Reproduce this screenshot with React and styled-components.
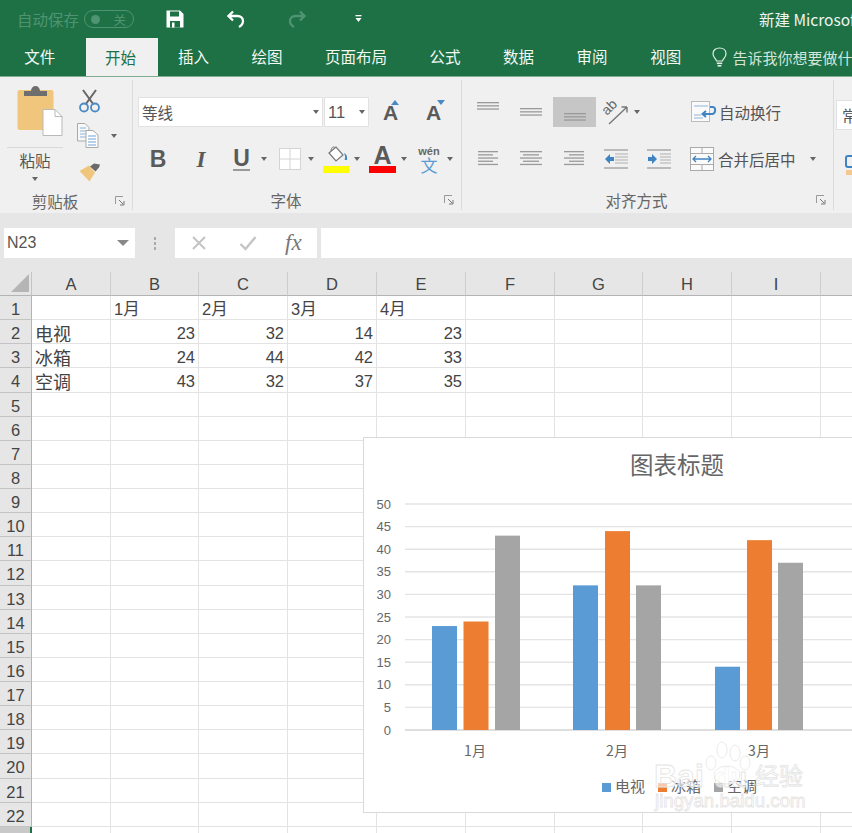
import React from 'react'
import styled, { createGlobalStyle } from 'styled-components'

const CJK = `"Noto Sans CJK SC", "Liberation Sans", sans-serif`
const LATIN = `"Liberation Sans", "Noto Sans CJK SC", sans-serif`

const GlobalStyle = createGlobalStyle`
  html, body { margin: 0; padding: 0; background: #fff; }
  * { box-sizing: border-box; }
`

const Page = styled.div`
  width: 852px;
  height: 833px;
  overflow: hidden;
  font-family: ${CJK};
  color: #444;
  background: #fff;
`

// title bar
const TitleBar = styled.div`
  height: 38px;
  background: #1e7145;
  display: flex;
  align-items: center;
  white-space: nowrap;
  overflow: hidden;
  padding-left: 17px;
  & > * {
    flex-shrink: 0;
  }
`
const AutoSave = styled.span`
  font-size: 15.5px;
  color: #4f9472;
  width: 67px;
`
const Toggle = styled.div`
  width: 50px;
  height: 18px;
  border: 1px solid #4f9472;
  border-radius: 9px;
  display: flex;
  align-items: center;
  justify-content: space-between;
  padding: 0 7px 0 6px;
  font-size: 12.5px;
  color: #4f9472;
  margin-right: 32px;
  &::before {
    content: '';
    width: 9px;
    height: 9px;
    border-radius: 50%;
    background: #4f9472;
  }
`
const QuickIcon = styled.div`
  width: ${p => p.$w}px;
  margin-right: ${p => p.$mr || 0}px;
  display: flex;
  justify-content: center;
  transform: ${p => (p.$flip ? 'scaleX(-1)' : 'none')};
`
const DocTitle = styled.span`
  font-size: 15.5px;
  color: #eef5f1;
  margin-left: 397px;
`

// tabs
const TabBar = styled.div`
  height: 39px;
  background: #1e7145;
  display: flex;
  align-items: flex-end;
  padding-left: 3px;
  white-space: nowrap;
  overflow: hidden;
  border-bottom: 1px solid #7fae95;
  & > * {
    flex-shrink: 0;
  }
`
const Tab = styled.div`
  height: 39px;
  line-height: 38px;
  padding: ${p => (p.$active ? '0 22px 0 19px' : '0 21.25px')};
  font-size: 15.5px;
  color: ${p => (p.$active ? '#1e7145' : '#f2f7f4')};
  background: ${p => (p.$active ? '#f0f0f0' : 'transparent')};
  margin: ${p => (p.$active ? '0 -1.25px -1px 9.5px' : '0')};
`
const TellMe = styled.div`
  display: flex;
  align-items: center;
  gap: 5px;
  margin-left: 10px;
  height: 38px;
  font-size: 15px;
  color: #d3e5da;
`

// ribbon
const Ribbon = styled.div`
  height: 136px;
  background: #f0f0f0;
  display: flex;
  overflow: hidden;
  padding-top: 3px;
`
const Group = styled.div`
  flex: 0 0 ${p => p.$w}px;
  height: 130px;
  border-right: 1px solid #dcdcdc;
  display: flex;
  flex-direction: column;
`
const GroupBody = styled.div`
  height: 113px;
  display: flex;
`
const GroupFooter = styled.div`
  height: 20px;
  display: grid;
  grid-template-columns: 1fr auto 1fr;
  align-items: center;
  font-size: 15.5px;
  line-height: 20px;
  color: #666;
  padding-right: 22px;
`
const Launcher = styled.svg`
  justify-self: end;
  width: 10px;
  height: 10px;
  margin-right: -15px;
`
const Stack = styled.div`
  display: flex;
  flex-direction: column;
`
const PasteColumn = styled(Stack)`
  width: 56px;
  margin-left: 7px;
  align-items: center;
  padding-top: 5px;
`
const PasteArt = styled.div`
  margin-left: 10px;
`
const PasteLabel = styled.div`
  width: 100%;
  border-top: 1px solid #d8d8d8;
  margin: 10px 0 5px;
  text-align: center;
  font-size: 15.5px;
  line-height: 24px;
  color: #555;
`
const ClipTools = styled(Stack)`
  margin-left: 14px;
  padding-top: 3px;
`
const ToolRow = styled.div`
  height: ${p => p.$h}px;
  display: flex;
  align-items: center;
  gap: ${p => p.$gap || 0}px;
  padding-left: ${p => p.$pad || 0}px;
`
const Rows = styled(Stack)`
  padding-top: 17px;
  gap: 17px;
`
const Row = styled.div`
  height: 30px;
  display: flex;
  align-items: center;
  padding-left: ${p => p.$pad || 0}px;
`
const Slot = styled.div`
  flex: 0 0 ${p => p.$w}px;
  height: 30px;
  margin-left: ${p => p.$ml || 0}px;
  display: flex;
  align-items: center;
  justify-content: center;
  position: relative;
  background: ${p => (p.$selected ? '#c6c6c6' : 'transparent')};
`
const Combo = styled.div`
  width: ${p => p.$w}px;
  height: 30px;
  background: #fff;
  border: 1px solid #e2e2e2;
  display: flex;
  align-items: center;
  justify-content: space-between;
  padding: 0 3px 0 3px;
  font-size: 15.5px;
  color: #555;
  margin-right: ${p => p.$mr || 0}px;
`
const SizeValue = styled.span`
  font-family: ${LATIN};
  font-size: 16.5px;
`
const FontGlyph = styled.span`
  font-family: ${p => (p.$serif ? '"Liberation Serif", serif' : LATIN)};
  font-size: ${p => p.$size || 23}px;
  font-weight: 700;
  font-style: ${p => (p.$italic ? 'italic' : 'normal')};
  color: #5a5a5a;
  line-height: 1;
  margin-top: ${p => p.$lift ? `-${p.$lift}px` : '0'};
`
const UnderGlyph = styled(FontGlyph)`
  border-bottom: 2px solid #999;
  line-height: 22px;
`
const SizeArrow = styled.svg`
  position: absolute;
  left: ${p => p.$left}px;
  top: 3px;
  width: 8px;
  height: 5px;
`
const ColorBar = styled.div`
  position: absolute;
  left: 0;
  bottom: 1px;
  width: 100%;
  height: 7px;
  background: ${p => p.$color};
`
const Caret = styled.i`
  display: block;
  width: 0;
  height: 0;
  border-left: 3.5px solid transparent;
  border-right: 3.5px solid transparent;
  border-top: 4px solid #666;
`
const NameCaret = styled(Caret)`
  border-left-width: 6px;
  border-right-width: 6px;
  border-top-width: 6px;
  border-top-color: #888;
`
const Wen = styled(Stack)`
  align-items: center;
  font-size: 11px;
  line-height: 11px;
  color: #666;
  font-family: ${LATIN};
  font-weight: 700;
`
const WenChar = styled.span`
  font-family: ${CJK};
  font-weight: 400;
  font-size: 17px;
  line-height: 16px;
  color: #5b9bd5;
`
const Action = styled.span`
  font-size: 15.5px;
  color: #555;
  white-space: nowrap;
  margin-left: ${p => p.$ml || 0}px;
`
const NumberBox = styled(Combo)`
  width: 60px;
  margin: 20px 0 0 2px;
  padding-left: 5px;
`
const NumberTool = styled.div`
  height: 30px;
  margin: 21px 0 0 11px;
  display: flex;
  align-items: center;
`

// formula bar
const FormulaBar = styled.div`
  height: 59px;
  background: #e6e6e6;
  display: flex;
  align-items: flex-start;
  padding: 15px 0 0 4px;
`
const NameBox = styled.div`
  width: 131px;
  height: 30px;
  background: #fff;
  display: flex;
  align-items: center;
  justify-content: space-between;
  padding: 0 6px 0 3px;
  font: 16px ${LATIN};
  color: #555;
`
const Grip = styled.div`
  width: 40px;
  height: 30px;
  display: flex;
  flex-direction: column;
  align-items: center;
  justify-content: center;
  gap: 2px;
  & > i {
    width: 2px;
    height: 3px;
    background: #aaa;
  }
`
const FormulaTools = styled.div`
  width: 142px;
  height: 30px;
  background: #fff;
  display: flex;
  align-items: center;
  padding-left: 16px;
  margin-right: 4px;
  gap: 32px;
`
const FxMark = styled.span`
  font: italic 23px "Liberation Serif", serif;
  color: #777;
  margin-left: -4px;
`
const FormulaInput = styled.div`
  flex: 1;
  height: 30px;
  background: #fff;
`

// sheet
const SheetArea = styled.div`
  position: relative;
  height: 561px;
  overflow: hidden;
`
const Sheet = styled.div`
  display: grid;
  grid-template-columns: 32px 79px 88px 89px 89px 89px 89px 88px 89px 89px 60px;
  grid-template-rows: 24px repeat(23, 24.14px);
  font-family: ${LATIN};
  font-size: 16.5px;
  color: #444;
`
const Corner = styled.div`
  background: #e6e6e6;
  border-right: 1px solid #c4c4c4;
  border-bottom: 1px solid #b4b4b4;
  display: flex;
  align-items: flex-end;
  justify-content: flex-end;
  padding: 0 2px 3px 0;
  &::after {
    content: '';
    width: 0;
    height: 0;
    border-left: 18px solid transparent;
    border-bottom: 18px solid #b5b5b5;
  }
`
const ColHead = styled.div`
  background: #e6e6e6;
  border-right: 1px solid #cdcdcd;
  border-bottom: 1px solid #b4b4b4;
  text-align: center;
  line-height: 25px;
`
const RowHead = styled.div`
  background: ${p => (p.$off ? '#c9c9c9' : '#e6e6e6')};
  border-right: ${p => (p.$off ? '2px solid #1e7145' : '1px solid #b4b4b4')};
  border-bottom: 1px solid #c4c4c4;
  text-align: center;
  line-height: 27px;
`
const Cell = styled.div`
  background: #fff;
  border-right: 1px solid #e3e3e3;
  border-bottom: 1px solid #e3e3e3;
  padding: 0 3px;
  line-height: 26px;
  white-space: nowrap;
  text-align: ${p => (p.$num ? 'right' : 'left')};
  font-size: ${p => (p.$big ? '18px' : 'inherit')};
  font-family: ${p => (p.$big ? CJK : 'inherit')};
`
const ChartFrame = styled.div`
  position: absolute;
  left: 363px;
  top: 165px;
  width: 500px;
  height: 376px;
  background: #fff;
  border: 1.5px solid #d9d9d9;
`
const ChartSvg = styled.svg`
  display: block;
  position: absolute;
  left: -1.5px;
  top: -1.5px;
  font-family: ${LATIN};
`
const IconSvg = styled.svg`
  display: block;
  flex-shrink: 0;
`
const LiftedSvg = styled(IconSvg)`
  margin-top: -8px;
`

const Svg = ({ w, h, children }) => (
  <IconSvg width={w} height={h} viewBox={`0 0 ${w} ${h}`}>{children}</IconSvg>
)

const SaveIcon = () => (
  <Svg w={18} h={18}>
    <path d="M0.5 0.5H14L17.5 4V17.5H0.5Z" fill="#fff" />
    <rect x="4" y="1.5" width="9" height="5" fill="#1e7145" />
    <rect x="4" y="11" width="10" height="6.5" fill="#1e7145" />
    <rect x="6" y="12.5" width="2.5" height="5" fill="#fff" />
  </Svg>
)
const UndoIcon = ({ color }) => (
  <Svg w={18} h={18}>
    <path d="M6 1.5L1.5 6L6 10.5M2 6H10.5C13.8 6 16 8 16 11C16 13.8 14.5 15.6 12 17" fill="none" stroke={color} strokeWidth="2.3" />
  </Svg>
)
const QuickCaret = () => (
  <Svg w={7} h={8}>
    <rect x="0.5" y="0" width="6" height="1.3" fill="#fff" />
    <path d="M0.5 3H6.5L3.5 7Z" fill="#fff" />
  </Svg>
)
const BulbIcon = () => (
  <Svg w={15} h={21}>
    <path d="M4.5 14C4 11.5 1 10.5 1 6.7C1 3.2 3.8 1 7.5 1C11.2 1 14 3.2 14 6.7C14 10.5 11 11.5 10.5 14Z" fill="none" stroke="#e2eee7" strokeWidth="1.2" />
    <rect x="4.8" y="15.5" width="5.4" height="1.6" fill="#e2eee7" />
    <rect x="5.6" y="18" width="3.8" height="1.6" fill="#e2eee7" />
  </Svg>
)
const PasteIcon = () => (
  <Svg w={46} h={52}>
    <rect x="0.5" y="5" width="36" height="40" rx="2" fill="#f0c67c" />
    <path d="M7 11V6H14C14 3 16 1 18.5 1C21 1 23 3 23 6H30V11Z" fill="#6e6e6e" />
    <path d="M26 24.5H38L45 31.5V50.5H26Z" fill="#fff" stroke="#b9b9b9" />
    <path d="M38 24.5V31.5H45" fill="none" stroke="#b9b9b9" />
  </Svg>
)
const CutIcon = () => (
  <Svg w={21} h={24}>
    <path d="M4 1L14.5 15.5M17 1L6.5 15.5" stroke="#666" strokeWidth="2" fill="none" />
    <circle cx="5" cy="18.5" r="4" fill="none" stroke="#4a8ac4" strokeWidth="1.8" />
    <circle cx="16" cy="18.5" r="4" fill="none" stroke="#4a8ac4" strokeWidth="1.8" />
  </Svg>
)
const CopyIcon = () => (
  <Svg w={22} h={25}>
    <path d="M0.5 0.5H8L12 4.5V18H0.5Z" fill="#f7f7f7" stroke="#aaa" />
    <path d="M3 5H9M3 8H9M3 11H9M3 14H9" stroke="#8fb5da" />
    <path d="M9 7.5H16L21 12V24.5H9Z" fill="#fff" stroke="#aaa" />
    <path d="M11 13H19M11 16H19M11 19H19M11 22H19" stroke="#6fa3d4" />
  </Svg>
)
const BrushIcon = () => (
  <Svg w={22} h={19}>
    <path d="M0.5 8L10 2.5L16 9.5L10.5 18.5Z" fill="#f0c67c" />
    <path d="M11 3.5L15 0.5L21 1.5L20 4.5L16.5 8.5Z" fill="#6a6a6a" />
  </Svg>
)
const SizeA = ({ down }) => (
  <Slot $w={43}>
    <FontGlyph $size={21}>A</FontGlyph>
    <SizeArrow viewBox="0 0 8 5" $left={down ? 25 : 22}>
      <path d={down ? 'M0 0H8L4 5Z' : 'M0 5H8L4 0Z'} fill="#4a8ac4" />
    </SizeArrow>
  </Slot>
)
const BorderIcon = () => (
  <Svg w={22} h={22}>
    <rect x="0.5" y="0.5" width="21" height="21" fill="#fff" stroke="#d4d4d4" />
    <path d="M11 1V21M1 11H21" stroke="#d4d4d4" />
  </Svg>
)
const FillIcon = () => (
  <LiftedSvg width="26" height="20" viewBox="0 0 26 20">
    <path d="M6 8L13 2L20 10L13 16Z" fill="#fff" stroke="#777" strokeWidth="1.2" />
    <path d="M8 6C8 3 10 1 12 2.5" fill="none" stroke="#777" />
    <path d="M21 8C24 9.5 24.5 12 24 15H21.5C22.5 13 22 10 21 8Z" fill="#4a8ac4" />
  </LiftedSvg>
)
const AlignIcon = ({ widths, y = 0, w = 22 }) => (
  <Svg w={w} h={20}>
    {widths.map(([x, width], i) => (
      <rect key={i} x={x} y={y + i * 3.2} width={width} height="1.3" fill="#9a9a9a" />
    ))}
  </Svg>
)
const OrientIcon = () => (
  <Svg w={27} h={26}>
    <path d="M7 25L25 8M25 8H19.5M25 8V13.5" fill="none" stroke="#777" strokeWidth="1.4" />
    <text x="0" y="0" fontSize="14" fill="#666" fontFamily={LATIN} transform="translate(5 17) rotate(-45)">ab</text>
  </Svg>
)
const WrapIcon = () => (
  <Svg w={26} h={22}>
    <rect x="0.5" y="0.5" width="18" height="20" fill="#fafafa" stroke="#bbb" />
    <path d="M3 5H17M3 14H10M3 17H12" stroke="#8fb5da" />
    <path d="M19 6H22C25 6 25 13 21 13H12M15 10L11.5 13L15 16" fill="none" stroke="#3f83c2" strokeWidth="2" />
  </Svg>
)
const IndentIcon = ({ flip }) => (
  <Svg w={24} h={20}>
    <path d="M0 1H24M0 19H24" stroke="#a8a8a8" strokeWidth="1.3" />
    <path d={flip ? 'M13 5H24M13 8H24M13 11H24M13 14H24' : 'M11 5H24M11 8H24M11 11H24M11 14H24'} stroke="#b0b0b0" />
    <path d={flip ? 'M1 8H5V5L10 10L5 15V12H1Z' : 'M10 8H6V5L1 10L6 15V12H10Z'} fill="#3f83c2" />
  </Svg>
)
const MergeIcon = () => (
  <Svg w={24} h={24}>
    <rect x="0.5" y="0.5" width="23" height="23" fill="#fafafa" stroke="#aaa" />
    <path d="M1 6.5H23M1 17.5H23M12 1V6.5M12 17.5V23" stroke="#aaa" />
    <path d="M3 12H21M6 9L3 12L6 15M18 9L21 12L18 15" fill="none" stroke="#3f83c2" strokeWidth="1.3" />
  </Svg>
)
const LauncherIcon = () => (
  <Launcher viewBox="0 0 10 10">
    <path d="M0.5 8V0.5H8" fill="none" stroke="#999" />
    <path d="M4 4L8 8M9 5V9H5" fill="none" stroke="#777" />
  </Launcher>
)

const columns = ['A', 'B', 'C', 'D', 'E', 'F', 'G', 'H', 'I', 'J']
const tableData = {
  1: { B: '1月', C: '2月', D: '3月', E: '4月' },
  2: { A: '电视', B: 23, C: 32, D: 14, E: 23 },
  3: { A: '冰箱', B: 24, C: 44, D: 42, E: 33 },
  4: { A: '空调', B: 43, C: 32, D: 37, E: 35 },
}
const tabs = ['插入', '绘图', '页面布局', '公式', '数据', '审阅', '视图']

const series = [
  { name: '电视', color: '#5b9bd5', values: [23, 32, 14], x: [432, 573, 715], legend: 602 },
  { name: '冰箱', color: '#ed7d31', values: [24, 44, 42], x: [463.5, 605, 747], legend: 658 },
  { name: '空调', color: '#a5a5a5', values: [43, 32, 37], x: [495, 636, 778], legend: 714 },
]
const months = [['1月', 475], ['2月', 617], ['3月', 759]]
const ticks = [0, 5, 10, 15, 20, 25, 30, 35, 40, 45, 50]
const valueY = v => 730 - v * 4.52

const Chart = () => (
  <ChartFrame>
    <ChartSvg width="500" height="376" viewBox="363 437 500 376">
      <text x="677" y="474" textAnchor="middle" fontSize="23.5" fill="#666" fontFamily={CJK}>图表标题</text>
      {ticks.map(t => (
        <g key={t}>
          <line x1="405" x2="860" y1={valueY(t)} y2={valueY(t)} stroke={t === 0 ? '#d4d4d4' : '#e4e4e4'} strokeWidth="1.4" />
          <text x="391" y={valueY(t) + 4.5} textAnchor="end" fontSize="13" fill="#666">{t}</text>
        </g>
      ))}
      {series.map(s => s.values.map((v, i) => (
        <rect key={s.name + i} x={s.x[i]} y={valueY(v)} width="25" height={v * 4.52} fill={s.color} />
      )))}
      {months.map(([m, x]) => (
        <text key={m} x={x} y="756" textAnchor="middle" fontSize="14" fill="#666" fontFamily={CJK}>{m}</text>
      ))}
      {series.map(s => (
        <g key={s.name}>
          <rect x={s.legend} y="783" width="9" height="9" fill={s.color} />
          <text x={s.legend + 13} y="792" fontSize="15" fill="#666" fontFamily={CJK}>{s.name}</text>
        </g>
      ))}
      <g fill="#fff" fillOpacity="0.6" stroke="#e4e4e4" strokeWidth="0.8">
        <text x="654" y="787" fontSize="32" fontWeight="700">Bai</text>
        <text x="714" y="787" fontSize="27" fontWeight="700">du</text>
        <text x="755" y="785" fontSize="24" fontFamily={CJK}>经验</text>
        <text x="655" y="807" fontSize="18.7">jingyan.baidu.com</text>
        <ellipse cx="727" cy="775" rx="13" ry="9" />
        <ellipse cx="711" cy="763" rx="5" ry="7" />
        <ellipse cx="722" cy="750" rx="5" ry="8" />
        <ellipse cx="735" cy="753" rx="5" ry="8" />
        <ellipse cx="745" cy="763" rx="5" ry="7" />
      </g>
    </ChartSvg>
  </ChartFrame>
)

const App = () => (
  <Page>
    <GlobalStyle />
    <TitleBar>
      <AutoSave>自动保存</AutoSave>
      <Toggle>关</Toggle>
      <QuickIcon $w={18} $mr={43}><SaveIcon /></QuickIcon>
      <QuickIcon $w={18} $mr={43}><UndoIcon color="#fff" /></QuickIcon>
      <QuickIcon $w={18} $mr={49} $flip><UndoIcon color="#4f9472" /></QuickIcon>
      <QuickIcon $w={7}><QuickCaret /></QuickIcon>
      <DocTitle>新建 Microsoft Excel 工作表 - Excel</DocTitle>
    </TitleBar>

    <TabBar>
      <Tab>文件</Tab>
      <Tab $active>开始</Tab>
      {tabs.map(t => <Tab key={t}>{t}</Tab>)}
      <TellMe><BulbIcon />告诉我你想要做什么</TellMe>
    </TabBar>

    <Ribbon>
      <Group $w={133}>
        <GroupBody>
          <PasteColumn>
            <PasteArt><PasteIcon /></PasteArt>
            <PasteLabel>粘贴</PasteLabel>
            <Caret />
          </PasteColumn>
          <ClipTools>
            <ToolRow $h={35} $pad={2}><CutIcon /></ToolRow>
            <ToolRow $h={35} $gap={12}><CopyIcon /><Caret /></ToolRow>
            <ToolRow $h={38} $pad={2}><BrushIcon /></ToolRow>
          </ClipTools>
        </GroupBody>
        <GroupFooter><span /><span>剪贴板</span><LauncherIcon /></GroupFooter>
      </Group>

      <Group $w={329}>
        <GroupBody>
          <Rows>
            <Row $pad={5}>
              <Combo $w={185} $mr={1}>等线<Caret /></Combo>
              <Combo $w={45}><SizeValue>11</SizeValue><Caret /></Combo>
              <SizeA />
              <SizeA down />
            </Row>
            <Row $pad={6}>
              <Slot $w={38}><FontGlyph>B</FontGlyph></Slot>
              <Slot $w={48}><FontGlyph $serif $italic>I</FontGlyph></Slot>
              <Slot $w={33}><UnderGlyph>U</UnderGlyph></Slot>
              <Slot $w={12}><Caret /></Slot>
              <Slot $w={22} $ml={9}><BorderIcon /></Slot>
              <Slot $w={12} $ml={4}><Caret /></Slot>
              <Slot $w={26} $ml={6}><FillIcon /><ColorBar $color="#ffff00" /></Slot>
              <Slot $w={10} $ml={3}><Caret /></Slot>
              <Slot $w={27} $ml={7}><FontGlyph $size={25} $lift={8}>A</FontGlyph><ColorBar $color="#ff0000" /></Slot>
              <Slot $w={10} $ml={3}><Caret /></Slot>
              <Slot $w={24} $ml={8}><Wen>wén<WenChar>文</WenChar></Wen></Slot>
              <Slot $w={10} $ml={4}><Caret /></Slot>
            </Row>
          </Rows>
        </GroupBody>
        <GroupFooter><span /><span>字体</span><LauncherIcon /></GroupFooter>
      </Group>

      <Group $w={372}>
        <GroupBody>
          <Rows>
            <Row $pad={5}>
              <Slot $w={42}><AlignIcon widths={[[0, 22], [0, 22], [0, 22]]} /></Slot>
              <Slot $w={44}><AlignIcon widths={[[0, 22], [0, 22], [0, 22]]} y={6} /></Slot>
              <Slot $w={43} $selected><AlignIcon widths={[[0, 22], [0, 22], [0, 22]]} y={11} /></Slot>
              <Slot $w={38}><OrientIcon /></Slot>
              <Slot $w={6}><Caret /></Slot>
              <Slot $w={30} $ml={49}><WrapIcon /></Slot>
              <Action>自动换行</Action>
            </Row>
            <Row $pad={5}>
              <Slot $w={42}><AlignIcon widths={[[0, 20], [0, 15], [0, 20], [0, 15], [0, 20]]} y={2} w={20} /></Slot>
              <Slot $w={44}><AlignIcon widths={[[0, 22], [3, 16], [0, 22], [3, 16], [0, 22]]} y={2} /></Slot>
              <Slot $w={41}><AlignIcon widths={[[0, 20], [5, 15], [0, 20], [5, 15], [0, 20]]} y={2} w={20} /></Slot>
              <Slot $w={43}><IndentIcon /></Slot>
              <Slot $w={43}><IndentIcon flip /></Slot>
              <Slot $w={31} $ml={6}><MergeIcon /></Slot>
              <Action $ml={1}>合并后居中</Action>
              <Slot $w={34}><Caret /></Slot>
            </Row>
          </Rows>
        </GroupBody>
        <GroupFooter><span /><span>对齐方式</span><LauncherIcon /></GroupFooter>
      </Group>

      <Stack>
        <NumberBox>常规</NumberBox>
        <NumberTool>
          <Svg w={10} h={22}>
            <rect x="1" y="1" width="14" height="11" rx="2" fill="none" stroke="#3f83c2" strokeWidth="2" />
            <rect x="1" y="15" width="9" height="5" fill="#f2c88e" />
          </Svg>
        </NumberTool>
      </Stack>
    </Ribbon>

    <FormulaBar>
      <NameBox>N23<NameCaret /></NameBox>
      <Grip><i /><i /><i /></Grip>
      <FormulaTools>
        <Svg w={16} h={16}><path d="M2 2L14 14M14 2L2 14" stroke="#c4c4c4" strokeWidth="2" /></Svg>
        <Svg w={18} h={16}><path d="M1.5 9L6.5 14L16.5 2" fill="none" stroke="#c4c4c4" strokeWidth="2.4" /></Svg>
        <FxMark>fx</FxMark>
      </FormulaTools>
      <FormulaInput />
    </FormulaBar>

    <SheetArea>
      <Sheet>
        <Corner />
        {columns.map(c => <ColHead key={c}>{c === 'J' ? '' : c}</ColHead>)}
        {Array.from({ length: 23 }, (_, i) => i + 1).map(r => (
          <React.Fragment key={r}>
            <RowHead $off={r === 23}>{r === 23 ? '' : r}</RowHead>
            {columns.map(c => {
              const value = tableData[r] && tableData[r][c]
              return (
                <Cell key={c} $num={typeof value === 'number'} $big={c === 'A'}>{value}</Cell>
              )
            })}
          </React.Fragment>
        ))}
      </Sheet>
      <Chart />
    </SheetArea>
  </Page>
)

export default App
